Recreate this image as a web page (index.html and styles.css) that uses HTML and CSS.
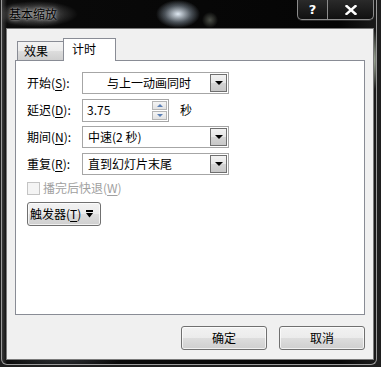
FILE: index.html
```html
<!DOCTYPE html>
<html lang="zh-CN">

<head>
  <meta charset="UTF-8">
  <title>基本缩放</title>
  <link rel="stylesheet" href="styles.css">
</head>

<body>
  <div class="window">
    <header class="titlebar">
      <span class="title">基本缩放</span>
      <div class="caption-btns">
        <span class="cap-btn help">?</span>
        <span class="cap-btn close">
          <svg viewBox="0 0 12 10" width="12" height="10">
            <path d="M1.5 1 L10.5 9 M10.5 1 L1.5 9" stroke="#fff" stroke-width="2.4" stroke-linecap="square" />
          </svg>
        </span>
      </div>
    </header>

    <div class="client">
      <div class="tabs">
        <span class="tab">效果</span>
        <span class="tab active">计时</span>
      </div>

      <div class="panel">
        <div class="form-grid">
          <label class="label">开始(<u>S</u>):</label>
          <div class="combo centered">
            <span class="combo-text">与上一动画同时</span>
            <span class="drop-btn"><i class="arrow"></i></span>
          </div>

          <label class="label">延迟(<u>D</u>):</label>
          <div class="spin-row">
            <div class="spin-box">
              <span class="spin-text">3.75</span>
              <span class="spin-btns">
                <span class="spin-btn up"><i class="spin-arrow"></i></span>
                <span class="spin-btn down"><i class="spin-arrow"></i></span>
              </span>
            </div>
            <span class="unit">秒</span>
          </div>

          <label class="label">期间(<u>N</u>):</label>
          <div class="combo">
            <span class="combo-text">中速(2 秒)</span>
            <span class="drop-btn"><i class="arrow"></i></span>
          </div>

          <label class="label">重复(<u>R</u>):</label>
          <div class="combo">
            <span class="combo-text">直到幻灯片末尾</span>
            <span class="drop-btn"><i class="arrow"></i></span>
          </div>
        </div>

        <div class="check-row">
          <span class="checkbox"></span>
          <span class="check-label">播完后快退(<u>W</u>)</span>
        </div>

        <button class="btn trigger-btn">
          <span class="btn-text">触发器(<u>T</u>)</span>
          <svg class="menu-arrow" viewBox="0 0 7 8" width="7" height="8">
            <rect x="0" y="0" width="7" height="2" fill="#000" />
            <polygon points="0,3 7,3 3.5,7.5" fill="#000" />
          </svg>
        </button>
      </div>

      <footer class="actions">
        <button class="btn action-btn">确定</button>
        <button class="btn action-btn">取消</button>
      </footer>
    </div>
  </div>
</body>

</html>
```

FILE: styles.css
```css
/* Base */
body {
  margin: 0;
  width: 381px;
  height: 367px;
  overflow: hidden;
  background: #1e1e1e;
  font-family: "Noto Sans CJK SC", "Noto Sans", sans-serif;
  font-size: 12px;
  color: #000;
}

u {
  text-decoration: underline;
  text-underline-offset: 2px;
}

/* Window frame (Aero, dark glass) */
.window {
  box-sizing: border-box;
  width: 376px;
  height: 365px;
  margin: 0 4px 2px 1px;
  padding: 0 2px 4px 4px;
  border: 1px solid #9a9a9a;
  border-top: none;
  border-radius: 0 0 6px 6px;
  background:
    radial-gradient(ellipse 42px 13px at 34px 14px, rgba(150, 150, 150, 0.75), rgba(90, 90, 90, 0.45) 60%, rgba(0, 0, 0, 0) 100%),
    radial-gradient(ellipse 22px 14px at 176px 14px, rgba(235, 245, 255, 0.95), rgba(200, 220, 240, 0.35) 60%, rgba(0, 0, 0, 0) 100%),
    radial-gradient(circle 8px at 208px 20px, rgba(200, 210, 190, 0.35), rgba(0, 0, 0, 0)),
    radial-gradient(ellipse 5px 30px at 372px 60px, rgba(220, 235, 210, 0.7), rgba(0, 0, 0, 0)),
    radial-gradient(ellipse 60px 20px at 60px 355px, rgba(120, 130, 140, 0.35), rgba(0, 0, 0, 0)),
    linear-gradient(90deg, #3a3a3a 0, #0a0a0a 5px, #050505 90%, #1a1a1a 100%);
  display: flex;
  flex-direction: column;
}

/* Title bar */
.titlebar {
  height: 28px;
  display: flex;
  justify-content: space-between;
  align-items: flex-start;
}

.title {
  margin: 6px 0 0 3px;
  line-height: 16px;
  font-size: 12px;
  color: #000;
  text-shadow: 0 0 2px #b0b0b0, 0 0 4px #9a9a9a, 0 0 8px #808080;
}

.caption-btns {
  display: flex;
  height: 19px;
  border: 1px solid #8c8c8c;
  border-top: none;
  border-radius: 0 0 5px 5px;
  background: linear-gradient(#2a2a2a, #101010);
  box-shadow: 0 1px 0 rgba(255, 255, 255, 0.15);
}

.cap-btn {
  display: flex;
  align-items: center;
  justify-content: center;
  color: #fff;
  font-family: "DejaVu Sans", sans-serif;
  font-weight: bold;
  font-size: 13px;
}

.help {
  width: 29px;
  border-right: 1px solid #8c8c8c;
}

.close {
  width: 45px;
}

/* Client area */
.client {
  flex: 1;
  background: #f0f0f0;
  border: 1px solid #7a7a7a;
  display: flex;
  flex-direction: column;
  padding: 0 8px;
}

/* Tabs */
.tabs {
  display: flex;
  align-items: flex-end;
  height: 22px;
  margin-top: 9px;
  padding-left: 2px;
}

.tab {
  box-sizing: border-box;
  height: 19px;
  width: 47px;
  padding-left: 6px;
  border: 1px solid #898c95;
  border-bottom: none;
  background: linear-gradient(#f3f3f3, #ebebeb 50%, #dddddd 51%, #cfcfcf);
  line-height: 18px;
}

.tab.active {
  height: 23px;
  width: 53px;
  margin-left: -1px;
  margin-bottom: -1px;
  padding-left: 8px;
  background: #fff;
  position: relative;
  z-index: 1;
  line-height: 20px;
}

/* Tab panel */
.panel {
  box-sizing: border-box;
  height: 255px;
  background: #fff;
  border: 1px solid #898c95;
  padding: 11px 0 0 11px;
}

.form-grid {
  display: grid;
  grid-template-columns: 55px 147px;
  grid-auto-rows: 22px;
  row-gap: 5px;
  align-items: center;
}

.label {
  line-height: 16px;
}

/* Combo boxes */
.combo {
  box-sizing: border-box;
  height: 22px;
  border: 1px solid #a6a6a6;
  display: flex;
  align-items: center;
  padding: 1px 1px 1px 5px;
}

.combo-text {
  flex: 1;
  line-height: 16px;
}

.combo.centered .combo-text {
  text-align: center;
}

.drop-btn {
  box-sizing: border-box;
  width: 17px;
  height: 18px;
  border: 1px solid #6f6f6f;
  background: linear-gradient(#f2f2f2, #e6e6e6 50%, #d4d4d4 51%, #c8c8c8);
  display: flex;
  align-items: center;
  justify-content: center;
}

.arrow {
  width: 0;
  height: 0;
  border-left: 4px solid transparent;
  border-right: 4px solid transparent;
  border-top: 4px solid #000;
}

/* Spin box */
.spin-row {
  display: flex;
  align-items: center;
  gap: 11px;
}

.spin-box {
  box-sizing: border-box;
  width: 87px;
  height: 23px;
  border: 1px solid #a6a6a6;
  display: flex;
  align-items: center;
  padding: 1px 1px 1px 4px;
}

.spin-text {
  flex: 1;
  line-height: 16px;
}

.spin-btns {
  display: flex;
  flex-direction: column;
  gap: 1px;
}

.spin-btn {
  box-sizing: border-box;
  width: 15px;
  height: 9px;
  border: 1px solid #b5b5b5;
  background: linear-gradient(#f5f5f5, #e2e2e2);
  display: flex;
  align-items: center;
  justify-content: center;
}

.spin-arrow {
  width: 0;
  height: 0;
  border-left: 3px solid transparent;
  border-right: 3px solid transparent;
}

.up .spin-arrow {
  border-bottom: 3px solid #5a7fb5;
}

.down .spin-arrow {
  border-top: 3px solid #5a7fb5;
}

.unit {
  line-height: 16px;
}

/* Checkbox */
.check-row {
  display: flex;
  align-items: center;
  gap: 3px;
  margin-top: 6px;
  height: 14px;
}

.checkbox {
  box-sizing: border-box;
  width: 13px;
  height: 13px;
  border: 1px solid #c4c4c4;
  background: #f4f4f4;
}

.check-label {
  color: #a0a0a0;
  line-height: 16px;
}

/* Buttons */
.btn {
  box-sizing: border-box;
  height: 24px;
  border: 1px solid #707070;
  border-radius: 3px;
  background: linear-gradient(#f2f2f2, #ebebeb 50%, #dddddd 51%, #cfcfcf);
  box-shadow: inset 0 0 0 1px rgba(255, 255, 255, 0.7);
  font-family: inherit;
  font-size: 12px;
  color: #000;
  padding: 0;
  line-height: 16px;
}

.trigger-btn {
  margin-top: 7px;
  width: 74px;
  display: flex;
  align-items: center;
  gap: 5px;
  padding-left: 2px;
  white-space: nowrap;
}

.actions {
  display: flex;
  justify-content: flex-end;
  gap: 12px;
  margin-top: 11px;
}

.action-btn {
  width: 86px;
}
```
